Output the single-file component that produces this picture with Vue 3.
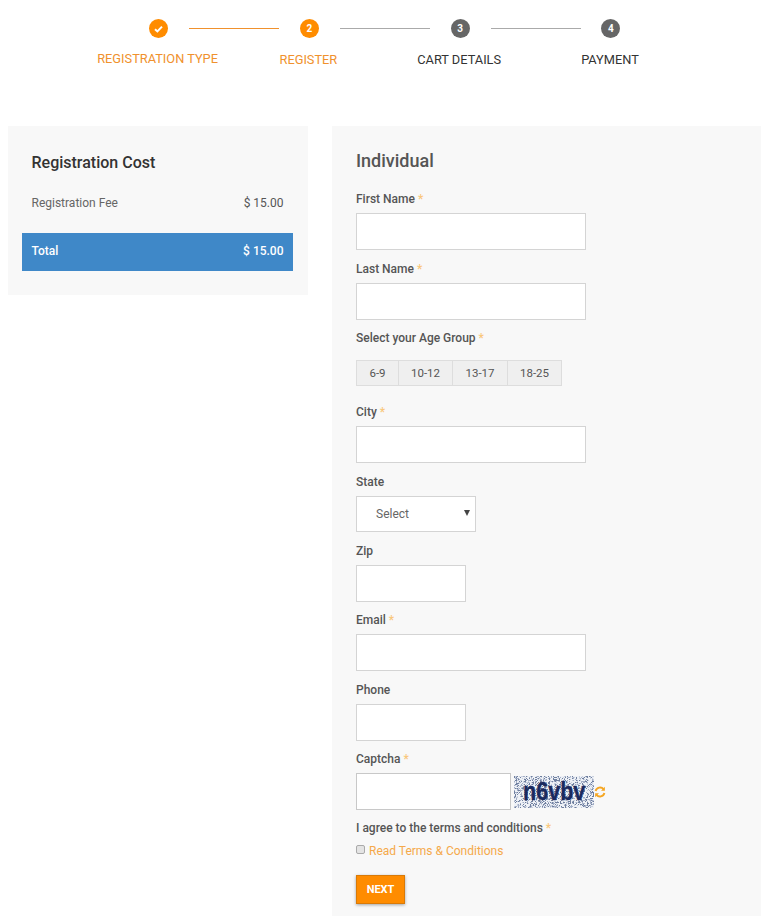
<script setup>
const steps = [
  { label: 'REGISTRATION TYPE', mark: 'check', done: true },
  { label: 'REGISTER', mark: '2', done: true },
  { label: 'CART DETAILS', mark: '3', done: false },
  { label: 'PAYMENT', mark: '4', done: false }
]
const ages = ['6-9', '10-12', '13-17', '18-25']

let seed = 11
const rnd = () => {
  seed = (seed * 16807) % 2147483647
  return seed / 2147483647
}
const noise = []
for (let y = 0; y < 32; y++) {
  for (let x = 0; x < 80; x++) {
    const r = rnd()
    if (r < 0.5) {
      noise.push({ x, y, c: r < 0.2 ? '#6f7f9f' : r < 0.36 ? '#a3aec6' : '#c9d0de' })
    }
  }
}
</script>

<template>
  <div class="page">
    <div class="stepper">
      <div v-for="(s, i) in steps" :key="s.label" class="step" :class="{ on: s.done, first: i === 0 }">
        <div class="track">
          <span class="dot">
            <svg v-if="s.mark === 'check'" width="9" height="8" viewBox="0 0 9 8">
              <path d="M1 4.2 L3.4 6.4 L8 1.6" fill="none" stroke="#fff" stroke-width="2" />
            </svg>
            <template v-else>{{ s.mark }}</template>
          </span>
          <span v-if="i < 3" class="line"></span>
        </div>
        <div class="step-label">{{ s.label }}</div>
      </div>
    </div>

    <div class="columns">
      <aside class="cost">
        <h3>Registration Cost</h3>
        <div class="fee"><span>Registration Fee</span><span>$ 15.00</span></div>
        <div class="total"><span>Total</span><span>$ 15.00</span></div>
      </aside>

      <form class="form" @submit.prevent>
        <h2>Individual</h2>

        <label class="lbl">First Name <i>*</i></label>
        <input class="inp wide" type="text" />

        <label class="lbl">Last Name <i>*</i></label>
        <input class="inp wide" type="text" />

        <label class="lbl">Select your Age Group <i>*</i></label>
        <div class="ages">
          <span v-for="a in ages" :key="a" class="age">{{ a }}</span>
        </div>

        <label class="lbl">City <i>*</i></label>
        <input class="inp wide" type="text" />

        <label class="lbl">State</label>
        <div class="select">
          <span>Select</span>
          <span class="arrow"></span>
        </div>

        <label class="lbl">Zip</label>
        <input class="inp small" type="text" />

        <label class="lbl">Email <i>*</i></label>
        <input class="inp wide" type="text" />

        <label class="lbl">Phone</label>
        <input class="inp small" type="text" />

        <label class="lbl">Captcha <i>*</i></label>
        <div class="captcha-row">
          <input class="inp cap" type="text" />
          <div class="captcha">
            <svg width="80" height="32" viewBox="0 0 80 32">
              <rect width="80" height="32" fill="#eef1f6" />
              <rect v-for="(n, k) in noise" :key="k" :x="n.x" :y="n.y" width="1" height="1" :fill="n.c" />
            </svg>
            <span class="cap-text">n6vbv</span>
          </div>
          <svg class="refresh" width="12" height="12" viewBox="0 0 12 12">
            <path d="M1.6 5 A4.6 4.6 0 0 1 9.6 3.2" fill="none" stroke="#f5a623" stroke-width="1.9" />
            <path d="M10.9 0.8 V4.7 H7 Z" fill="#f5a623" />
            <path d="M10.4 7 A4.6 4.6 0 0 1 2.4 8.8" fill="none" stroke="#f5a623" stroke-width="1.9" />
            <path d="M1.1 11.2 V7.3 H5 Z" fill="#f5a623" />
          </svg>
        </div>

        <label class="lbl agree">I agree to the terms and conditions <i>*</i></label>
        <div class="terms">
          <span class="check"></span>
          <a href="#" @click.prevent>Read Terms &amp; Conditions</a>
        </div>

        <button class="next" type="button">NEXT</button>
      </form>
    </div>
  </div>
</template>

<style>
html, body { margin: 0; background: #fff; overflow: hidden; }
</style>

<style scoped>
.page {
  width: 782px;
  height: 916px;
  overflow: hidden;
  font-family: Roboto, "Liberation Sans", sans-serif;
  font-size: 12px;
  color: #555;
  box-sizing: border-box;
}
.stepper {
  display: grid;
  grid-template-columns: repeat(4, 150.8px);
  justify-content: start;
  padding: 18px 0 0 83.2px;
  height: 126px;
  box-sizing: border-box;
}
.step { display: flex; flex-direction: column; align-items: center; }
.track { position: relative; height: 20px; width: 100%; display: flex; justify-content: center; }
.dot {
  width: 19px;
  height: 19px;
  border-radius: 50%;
  background: #666;
  color: #fff;
  font-size: 10px;
  font-weight: 700;
  display: flex;
  align-items: center;
  justify-content: center;
  margin-top: 1px;
}
.on .dot { background: #ff8c00; }
.line {
  position: absolute;
  left: 105.8px;
  top: 10px;
  width: 90px;
  height: 1px;
  background: #aaa;
}
.first .line { background: #f0912d; }
.step-label {
  margin-top: 14px;
  margin-left: -2px;
  font-size: 12.8px;
  line-height: 16px;
  color: #333;
  white-space: nowrap;
}
.on .step-label { color: #f0912d; }
.first .step-label { margin-top: 13px; margin-left: -2px; }

.columns {
  display: flex;
  align-items: flex-start;
  gap: 24px;
  padding-left: 8px;
}
.cost {
  width: 300px;
  height: 169px;
  background: #f8f8f8;
  padding: 27px 15px 0 14px;
  box-sizing: border-box;
}
.cost h3 {
  margin: 0 0 0 9.5px;
  font-size: 16px;
  line-height: 19px;
  font-weight: 500;
  color: #333;
}
.fee {
  display: flex;
  justify-content: space-between;
  margin: 23px 9.5px 0;
  line-height: 16px;
}
.fee span:first-child { color: #666; }
.total {
  display: flex;
  justify-content: space-between;
  align-items: center;
  box-sizing: border-box;
  height: 38px;
  margin-top: 22px;
  padding: 0 9.5px 2px;
  background: #3f88c8;
  color: #fff;
  font-weight: 500;
}
.form {
  width: 429px;
  height: 800px;
  background: #f8f8f8;
  padding: 23px 0 0 24px;
  box-sizing: border-box;
  display: flex;
  flex-direction: column;
  align-items: flex-start;
}
.form h2 {
  margin: 0 0 19.2px;
  font-size: 18px;
  line-height: 23px;
  font-weight: 500;
  color: #555;
}
.lbl {
  display: block;
  font-size: 12px;
  font-weight: 500;
  line-height: 16px;
  margin-bottom: 6px;
  color: #555;
}
.lbl i { font-style: normal; color: #f9c77c; }
.inp {
  display: block;
  height: 37px;
  background: #fff;
  border: 1px solid #d4d4d4;
  box-sizing: border-box;
  margin: 0 0 10.5px;
  padding: 0 8px;
  outline: none;
}
.wide { width: 230px; }
.small { width: 110px; }
.ages {
  display: flex;
  height: 26px;
  margin: 7.8px 0 18.2px;
  border: 1px solid #ddd;
  box-sizing: border-box;
  background: #efefef;
  font-size: 11.5px;
}
.age {
  display: flex;
  align-items: center;
  justify-content: center;
  box-sizing: border-box;
  border-left: 1px solid #ddd;
  color: #555;
}
.age:nth-child(1) { width: 41px; border-left: 0; }
.age:nth-child(2) { width: 54px; }
.age:nth-child(3) { width: 55px; }
.age:nth-child(4) { width: 54px; }
.select {
  position: relative;
  width: 120px;
  height: 36px;
  border: 1px solid #d4d4d4;
  background: #fff;
  box-sizing: border-box;
  display: flex;
  align-items: center;
  padding-left: 19px;
  margin-bottom: 11.2px;
  color: #666;
}
.arrow {
  position: absolute;
  right: 5px;
  top: 13px;
  width: 0;
  height: 0;
  border-left: 3px solid transparent;
  border-right: 3px solid transparent;
  border-top: 6px solid #444;
}
.captcha-row { display: flex; align-items: center; height: 37px; margin-bottom: 10px; }
.cap { width: 155px; margin: 0; border-color: #c8c8c8; }
.captcha {
  position: relative;
  width: 80px;
  height: 32px;
  margin-left: 3px;
  line-height: 0;
}
.cap-text {
  position: absolute;
  left: 9px;
  top: 15px;
  font-family: "Liberation Sans", sans-serif;
  font-size: 26px;
  line-height: 0;
  font-weight: 700;
  letter-spacing: 0;
  color: #1a2a5e;
  -webkit-text-stroke: 0.4px #1a2a5e;
  transform: scaleX(0.83);
  transform-origin: left center;
}
.refresh { margin-left: 0; }
.agree { margin-bottom: 6.4px; }
.terms { display: flex; align-items: center; height: 16px; }
.check {
  width: 9px;
  height: 9px;
  margin-right: 4px;
  box-sizing: border-box;
  border: 1px solid #aaa;
  border-radius: 2px;
  background: #e4e4e4;
  margin-bottom: 2px;
}
.terms a { color: #f5a94a; text-decoration: none; }
.next {
  margin-top: 16.2px;
  width: 49px;
  height: 29px;
  padding: 0;
  background: #ff8c00;
  border: 1px solid #d97a08;
  color: #fff;
  font-family: inherit;
  font-size: 11px;
  font-weight: 700;
  box-shadow: 0 1px 3px rgba(0, 0, 0, 0.35);
}
</style>
